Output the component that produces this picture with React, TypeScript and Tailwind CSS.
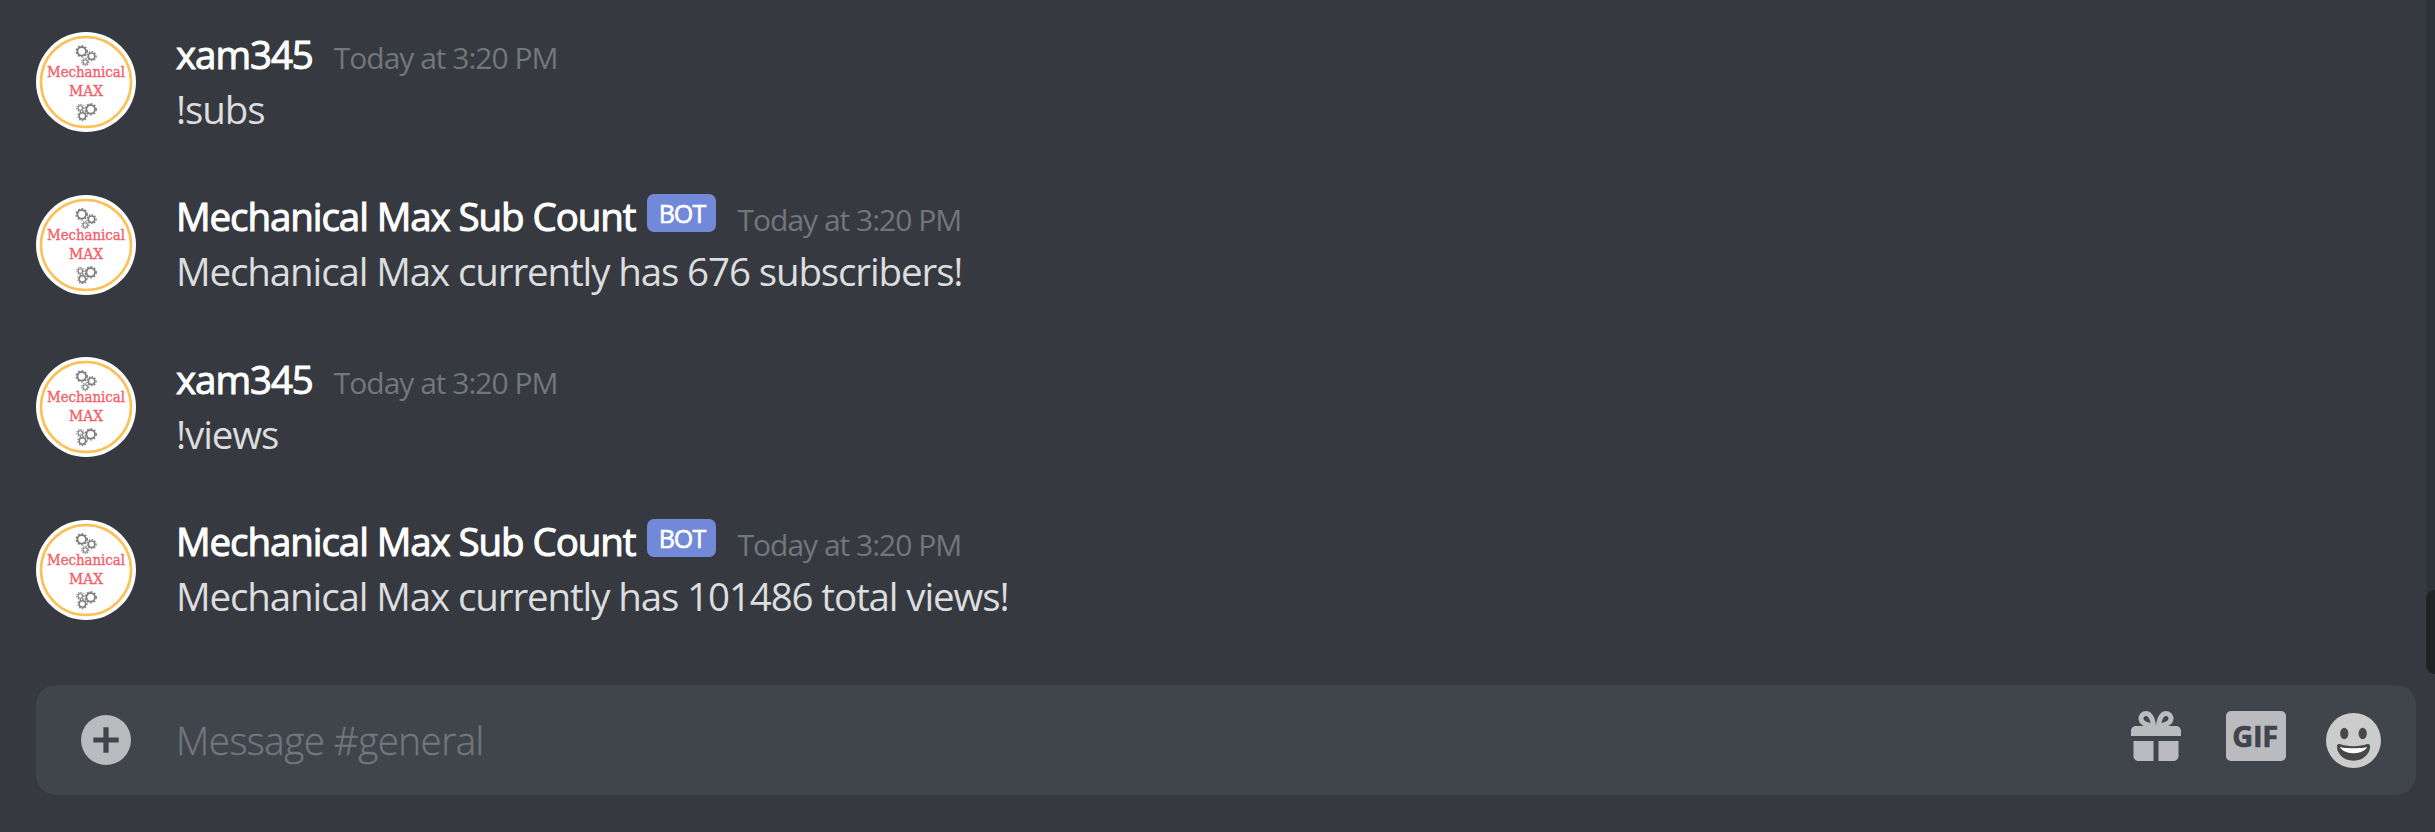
import React from 'react';

type Message = {
  author: string;
  bot?: boolean;
  time: string;
  text: string;
};

const messages: Message[] = [
  { author: 'xam345', time: 'Today at 3:20 PM', text: '!subs' },
  {
    author: 'Mechanical Max Sub Count',
    bot: true,
    time: 'Today at 3:20 PM',
    text: 'Mechanical Max currently has 676 subscribers!',
  },
  { author: 'xam345', time: 'Today at 3:20 PM', text: '!views' },
  {
    author: 'Mechanical Max Sub Count',
    bot: true,
    time: 'Today at 3:20 PM',
    text: 'Mechanical Max currently has 101486 total views!',
  },
];

function Gear({ cx, cy, r }: { cx: number; cy: number; r: number }) {
  const tooth = (2 * Math.PI * (r + 0.9)) / 20;
  return (
    <g fill="none" stroke="#7d7e80">
      <circle cx={cx} cy={cy} r={r - 0.6} strokeWidth={r * 0.38} />
      <circle
        cx={cx}
        cy={cy}
        r={r + 0.7}
        strokeWidth={1.3}
        strokeDasharray={`${tooth} ${tooth}`}
      />
    </g>
  );
}

function Avatar() {
  return (
    <svg viewBox="0 0 100 100" className="h-[100px] w-[100px] shrink-0">
      <circle cx="50" cy="50" r="50" fill="#ffffff" />
      <circle cx="50" cy="50" r="45" fill="none" stroke="#fbc156" strokeWidth="2.6" />
      <Gear cx={45.7} cy={19.3} r={4.9} />
      <Gear cx={55.6} cy={24.2} r={3.8} />
      <Gear cx={49.2} cy={30} r={2.8} />
      <Gear cx={54.7} cy={77.3} r={4.9} />
      <Gear cx={46.4} cy={84} r={3.8} />
      <Gear cx={44.3} cy={76} r={2.8} />
      <g
        fill="#f4606a"
        stroke="#f4606a"
        strokeWidth="0.35"
        fontFamily="'DejaVu Serif', serif"
        fontSize="14"
      >
        <text x="11" y="45" textLength="78" lengthAdjust="spacingAndGlyphs">
          Mechanical
        </text>
        <text x="33" y="64" textLength="34" lengthAdjust="spacingAndGlyphs">
          MAX
        </text>
      </g>
    </svg>
  );
}

function MessageRow({ message }: { message: Message }) {
  return (
    <div className="flex h-[162.5px] gap-10">
      <Avatar />
      <div className="-mt-[5.5px] whitespace-nowrap">
        <div className="flex h-[55px] items-baseline leading-[55px]">
          <span className="text-[38.5px] tracking-[-1.08px] text-white [-webkit-text-stroke:1px_#ffffff]">
            {message.author}
          </span>
          {message.bot && (
            <span className="relative -top-2 ml-[12px] flex h-[38px] w-[69px] items-center justify-center rounded-[7px] bg-[#7289da] text-[25px] leading-[38px] tracking-[-0.9px] text-white [-webkit-text-stroke:0.6px_#ffffff]">
              BOT
            </span>
          )}
          <span className="ml-[21px] text-[30px] tracking-[-1px] text-[#72767d]">
            {message.time}
          </span>
        </div>
        <p className="text-[38.5px] leading-[55px] tracking-[-1.12px] text-[#dcddde]">
          {message.text}
        </p>
      </div>
    </div>
  );
}

function GiftIcon() {
  return (
    <svg viewBox="2 2 20 20" fill="#b9bbbe" className="h-[50px] w-[50px]">
      <path
        fillRule="evenodd"
        clipRule="evenodd"
        d="M16.886 8H20C21.104 8 22 8.896 22 10V12H2V10C2 8.896 2.897 8 4 8H7.114C6.663 7.764 6.236 7.477 5.879 7.121C4.709 5.951 4.709 4.048 5.879 2.879C7.012 1.746 8.986 1.746 10.121 2.877C11.758 4.514 11.979 7.595 11.998 7.941L12 8L12.002 7.941C12.021 7.595 12.242 4.514 13.879 2.877C15.014 1.745 16.986 1.746 18.121 2.877C19.29 4.049 19.29 5.952 18.121 7.121C17.764 7.477 17.337 7.764 16.886 8ZM7.293 5.707C6.903 5.316 6.903 4.682 7.293 4.292C7.481 4.103 7.732 4 8 4C8.268 4 8.519 4.103 8.707 4.292C9.297 4.882 9.641 5.94 9.825 6.822C8.945 6.639 7.879 6.293 7.293 5.707ZM14.174 6.824C14.359 5.941 14.702 4.883 15.293 4.293C15.481 4.103 15.732 4 16 4C16.268 4 16.519 4.103 16.706 4.291C17.096 4.682 17.097 5.316 16.707 5.707C16.116 6.298 15.057 6.642 14.174 6.824ZM3 14V20C3 21.102 3.897 22 5 22H11V14H3ZM13 14V22H19C20.104 22 21 21.102 21 20V14H13Z"
      />
    </svg>
  );
}

function SmileIcon() {
  return (
    <svg viewBox="0 0 55 55" className="mt-[2px] h-[55px] w-[55px]">
      <circle cx="27.5" cy="27.5" r="27.5" fill="#cccccc" />
      <ellipse cx="18.3" cy="20.5" rx="4.1" ry="5.7" fill="#484848" />
      <ellipse cx="36.7" cy="20.5" rx="4.1" ry="5.7" fill="#484848" />
      <path
        d="M27.5 33.2C21.9 33.2 18.2 32.5 13.8 31.1C12.7 30.8 10.9 31.1 10.9 33.6C10.9 40 16.9 47.8 27.5 47.8C38.1 47.8 44.1 40 44.1 33.6C44.1 31.1 42.3 30.8 41.2 31.1C36.8 32.5 33.1 33.2 27.5 33.2Z"
        fill="#484848"
      />
      <path
        d="M13.8 34C13.8 34 18.3 35.3 27.5 35.3C36.7 35.3 41.2 34 41.2 34C41.2 34 38.2 40.3 27.5 40.3C16.8 40.3 13.8 34 13.8 34Z"
        fill="#ffffff"
      />
    </svg>
  );
}

function MessageInput() {
  return (
    <div className="ml-9 mr-[19px] mt-[11px] flex h-[110px] items-center rounded-[20px] bg-[#40444b] pl-[45px] pr-[35px]">
      <svg viewBox="0 0 50 50" className="h-[50px] w-[50px] shrink-0">
        <circle cx="25" cy="25" r="25" fill="#b9bbbe" />
        <path d="M25 12.3V37.7M12.3 25H37.7" stroke="#40444b" strokeWidth="5.2" />
      </svg>
      <span className="ml-[45px] grow text-[38.5px] font-light leading-[55px] tracking-[-0.5px] text-[#72767d] [-webkit-text-stroke:0.4px_#72767d]">
        Message #general
      </span>
      <div className="flex h-[58px] items-start">
        <GiftIcon />
        <div className="ml-[45px] flex h-[50px] w-[60px] items-center justify-center rounded-[5px] bg-[#b9bbbe] pr-[2px] text-[29px] font-bold leading-[50px] tracking-[-0.3px] text-[#40444b] [-webkit-text-stroke:0.6px_#40444b]">
          GIF
        </div>
        <div className="ml-10">
          <SmileIcon />
        </div>
      </div>
    </div>
  );
}

function App() {
  return (
    <div className="h-[832px] w-full overflow-hidden bg-[#36393f] font-['Open_Sans','Noto_Sans',sans-serif]">
      <div className="flex h-[674px]">
        <div className="grow pl-9 pt-8">
          {messages.map((message, index) => (
            <MessageRow key={index} message={message} />
          ))}
        </div>

        {/* Scrollbar */}
        <div className="flex w-[9px] flex-col justify-end rounded-bl-[10px] bg-[#2e3338]">
          <div className="h-[84px] rounded-l-[9px] bg-[#202225]" />
        </div>
      </div>

      <MessageInput />
    </div>
  );
}

export default App;
